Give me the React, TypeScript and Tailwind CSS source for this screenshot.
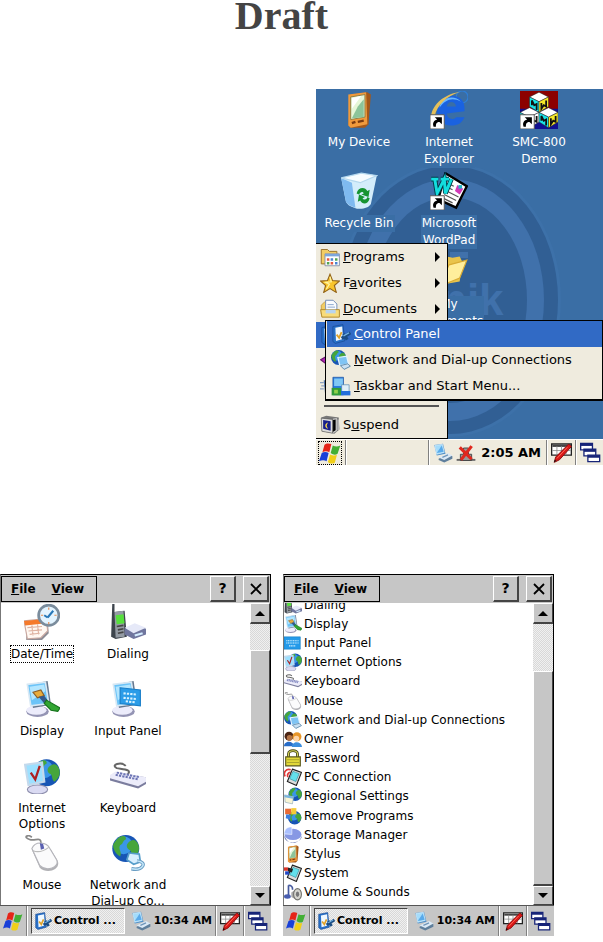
import React, { ReactNode } from "react";

type IconProps = { className?: string };

const Svg = ({ className = "size-8", children }: { className?: string; children: ReactNode }) => (
  <svg viewBox="0 0 32 32" className={"shrink-0 " + className} aria-hidden="true">
    {children}
  </svg>
);

const Shortcut = () => (
  <g>
    <path d="M0 20h12v12H0z" fill="#fff" stroke="#555" strokeWidth=".8" />
    <path d="M4 22h6v6l-2-2c-3 0-3 2-3 4H3c-1-3 0-5 3-6z" fill="#000" />
  </g>
);

const Pda = ({ className }: IconProps) => (
  <Svg className={className}>
    <path d="M9 3 23 1l3 2-2 25-3 3H9l-2-3z" fill="#a4581a" />
    <path d="M7 3 22 1l1 27-14 3-2-2z" fill="#f09a3c" />
    <path d="M9 5 21 3v19L9 24z" fill="#e6f6d8" stroke="#8a7a40" strokeWidth=".8" />
    <path d="m10 23 5-10 5-6v15z" fill="#8cc49a" />
    <path d="m10 6 8-2-8 11z" fill="#fff" />
    <path d="m10 27 3-1m2 0 5-1" stroke="#7a3a10" strokeWidth="2" />
  </Svg>
);

const Recycle = ({ className }: IconProps) => (
  <Svg className={className}>
    <path d="m1 5 17-4 13 2-5 24c-2 4-10 5-14 3-4-1-6-3-7-5z" fill="#d4edfb" />
    <path d="m1 5 9 4 3 21c-4-1-7-3-8-5z" fill="#7fbaf0" />
    <path d="m1 5 17-4 13 2-14 6z" fill="#f6fcff" stroke="#b4d8ee" />
    <path d="M14 18c1-5 7-6 9-2l2-1-1 6-6-2 2-1c-1-2-3-1-4 1zM25 22c-1 5-6 6-8 2l-2 1 1-6 5 2-2 1c1 2 4 1 4-1z" fill="#169432" />
  </Svg>
);

const Explorer = ({ className }: IconProps) => (
  <Svg className={className}>
    <circle cx="27" cy="5" r="5" fill="none" stroke="#2e7fd8" strokeWidth="1" />
    <path d="M29 17C30 8 25 4 18 4 10 4 6 10 6 17c0 8 5 12 12 12 5 0 9-2 11-7h-7c-1 2-7 3-8-3z" fill="#1a62e0" />
    <path d="M14 13c1-5 7-5 8 0z" fill="#3a6ea5" />
    <path d="M8 14C9 6 20 2 26 9c-7-4-13-2-18 5z" fill="#69b8ff" />
    <path d="M1 21C2 11 13 2 25 1 14 4 6 12 4 21z" fill="#e5c05a" />
    <Shortcut />
  </Svg>
);

const Cube = ({ x, y, a, b }: { x: number; y: number; a: string; b: string }) => (
  <g transform={"translate(" + x + " " + y + ")"} stroke="#222" strokeWidth=".4">
    <path d="m0 4 8-4 8 4-8 4z" fill="#fff" />
    <path d="m0 4 8 4v9l-8-5z" fill={a} />
    <path d="m16 4-8 4v9l8-5z" fill={b} />
    <path d="M2 11V7l2 4 2-1v5M10 9v5l2-3 2 1V7" stroke="#111" strokeWidth="1.500" fill="none" />
  </g>
);

const Cubes = ({ className }: IconProps) => (
  <Svg className={className}>
    <path d="M0 0h32v32H0z" fill="#8c0000" />
    <path d="M0 15h32v17H0z" fill="#101090" />
    <Cube x={8} y={1} a="#19e4e8" b="#f5e829" />
    <Cube x={0} y={14} a="#19e4e8" b="#fff" />
    <Cube x={16} y={14} a="#19e4e8" b="#f5e829" />
    <Shortcut />
  </Svg>
);

const WordPad = ({ className }: IconProps) => (
  <Svg className={className}>
    <path d="m13 1 18 11-9 18-15-7z" fill="#fff" stroke="#000" strokeWidth="2" />
    <path d="m16 10 4 2m-5 1 4 2m-5 1 10 5m-12-2 10 5m-11-2 8 4" stroke="#555" />
    <path d="m23 11 5 3-3 5-4-3z" fill="#d23ab8" />
    <path d="M24 11h3v3h-3z" fill="#28b8c8" />
    <path d="M1 6h6m2 0h7M4 6l2 12 6-12 1 12 5-12" fill="none" stroke="#003a48" strokeWidth="4" />
    <path d="M1 6h6m2 0h7M4 6l2 12 6-12 1 12 5-12" fill="none" stroke="#13dede" strokeWidth="2.500" />
    <Shortcut />
  </Svg>
);

const Folder = ({ className }: IconProps) => (
  <Svg className={className}>
    <path d="m5 7 9-4 5 1 6-1 2 4-2 17-17 3z" fill="#e9c44c" />
    <path d="m16 10 15-4-6 15-17 7z" fill="#ffee9c" stroke="#d9ac35" />
  </Svg>
);

const Programs = ({ className }: IconProps) => (
  <Svg className={className}>
    <path d="M2 4h10l3 3h12v20H2z" fill="#f2cd65" stroke="#98702a" strokeWidth="1.500" />
    <path d="M8 11h23v19H8z" fill="#fff" stroke="#8890a8" strokeWidth="1.500" />
    <path d="M8 11h23v4H8z" fill="#7da6dc" />
    <path d="M11 18h4v4h-4zM17 24h4v4h-4z" fill="#e55942" />
    <path d="M17 18h4v4h-4zM24 24h4v4h-4z" fill="#4a83d4" />
    <path d="M24 18h4v4h-4zM11 24h4v4h-4z" fill="#53a553" />
  </Svg>
);

const Star = ({ className }: IconProps) => (
  <Svg className={className}>
    <path d="m16 2 4 10 11 1-8 7 3 11-10-6-10 6 3-11-8-7 11-1z" fill="#f9c52c" stroke="#94651a" strokeWidth="1.800" />
    <path d="m16 6 2 8-9 1 6 3-5 8" fill="none" stroke="#fff3a0" strokeWidth="2" />
  </Svg>
);

const Documents = ({ className }: IconProps) => (
  <Svg className={className}>
    <path d="M2 10 8 4h9v20H2z" fill="#f2cd65" stroke="#b18728" />
    <path d="M9 2h12l6 6v16H9z" fill="#fafcff" stroke="#718bb5" strokeWidth="1.500" />
    <path d="M12 9h10m-10 4h12" stroke="#88a4cc" strokeWidth="1.500" />
    <path d="M1 17h30v12H3z" fill="#f8dc7b" stroke="#b18728" strokeWidth="1.500" />
    <path d="M9 17h16v6H9z" fill="#b8d4ef" />
  </Svg>
);

const ControlIcon = ({ className }: IconProps) => (
  <Svg className={className}>
    <path d="m3 4 16-3 3 26-15 4-4-3z" fill="#2870c8" stroke="#17458d" />
    <path d="m7 6 11-2 1 20L8 27z" fill="#eff8ff" />
    <path d="m9 17 4 5 4-9" fill="none" stroke="#e0a32c" strokeWidth="3" />
    <path d="m17 23 14-9m-11 2 6 9" stroke="#1b4d83" strokeWidth="5" />
    <path d="m20 19 9-5" stroke="#76b7e8" strokeWidth="2" />
  </Svg>
);

const HelpBook = ({ className }: IconProps) => (
  <Svg className={className}>
    <path d="m1 14 14-8 15 6-13 14z" fill="#b42ab8" stroke="#6c1570" strokeWidth="2" />
  </Svg>
);

const RunIcon = ({ className }: IconProps) => (
  <Svg className={className}>
    <path d="M0 9h6M2 14h6M0 19h6" stroke="#8ca0c0" strokeWidth="2" />
    <path d="M7 6h22v20H9z" fill="#dce9f8" stroke="#5577a8" strokeWidth="2" />
  </Svg>
);

const GlobeShape = ({ x = 0, y = 0 }: { x?: number; y?: number }) => (
  <g transform={"translate(" + x + " " + y + ")"}>
    <circle cx="12" cy="12" r="12" fill="#1755b5" />
    <circle cx="10" cy="9" r="8" fill="#3a96e8" />
    <path d="M4 4c5-5 9-3 8 0-3 1-2 4-5 5-2 4 2 6 0 10-4-2-7-7-6-11zM14 7c4-4 7-3 9 1 2 5 0 9-4 12-3-2-1-6-4-7-2-1-3-4-1-6z" fill="#46a53c" />
  </g>
);

const Network = ({ className }: IconProps) => (
  <Svg className={className}>
    <GlobeShape x={2} y={0} />
    <path d="m17 16 9 1 1 7-6 2-6-4z" fill="#d8efff" stroke="#559dca" strokeWidth="1.500" />
    <path d="M24 23c10 1 5 9-5 7" fill="none" stroke="#6a9ec4" strokeWidth="3" />
    <path d="M24 23c10 1 5 9-5 7" fill="none" stroke="#c4e7fa" strokeWidth="1.300" />
  </Svg>
);

const NetworkSmall = ({ className }: IconProps) => (
  <Svg className={className}>
    <GlobeShape />
    <path d="m11 12 14-2 3 12-14 3z" fill="#7fc4f4" stroke="#e6f4ff" strokeWidth="2" />
    <path d="m15 25 12-3 4 4-10 5z" fill="#c9e0f2" stroke="#5a86a8" strokeWidth="1.500" />
  </Svg>
);

const TaskbarIcon = ({ className }: IconProps) => (
  <Svg className={className}>
    <path d="M3 2h17v28H3z" fill="#287be0" stroke="#174b96" />
    <path d="M5 4h14v12H5z" fill="#80c8f5" />
    <path d="M17 14h12v12H17z" fill="#dfeef8" stroke="#467eaa" />
    <path d="M1 19h15v12H1z" fill="#2f9a38" />
    <path d="M5 22h6v6H5z" fill="#8fd04a" />
    <path d="M16 24h15v7H16z" fill="#236dda" />
  </Svg>
);

const Suspend = ({ className }: IconProps) => (
  <Svg className={className}>
    <path d="m2 4 8-3 20 3 1 19-8 7-20-4z" fill="#777" />
    <path d="m2 5 18 2v22L3 26z" fill="#ddd" stroke="#555" />
    <path d="m21 7 5-1v19l-5 3m8-21v17" stroke="#ccc" strokeWidth="2" />
    <path d="m5 8 12 2v15L5 22z" fill="#18208b" />
    <path d="M13 12c-6 1-6 9 0 10-3-4-3-6 0-10z" fill="#f8d94a" />
  </Svg>
);

const Flag = ({ className }: IconProps) => (
  <Svg className={className}>
    <path d="M8 4c3-3 7-2 10-1l-3 12c-3-2-7-2-10 0z" fill="#e52518" />
    <path d="M20 5c4 2 7 2 11 0l-4 12c-3 2-6 2-10-1z" fill="#43af35" />
    <path d="M4 16c3-2 7-2 10 0l-3 12c-3-2-7-2-11 0z" fill="#1940d8" />
    <path d="M16 18c4 2 7 2 10 1l-3 11c-4 2-7 2-10-1z" fill="#f1cf18" />
  </Svg>
);

const Computer = ({ className }: IconProps) => (
  <Svg className={className}>
    <path d="m2 3 14-2 4 16-14 3z" fill="#4d8fc8" />
    <path d="m3 4 12-2 3 13-12 3z" fill="#a4dcfb" stroke="#e0f3ff" />
    <path d="m6 16 8-12 3 10z" fill="#5aaaea" />
    <path d="m9 25 15-8 7 4v4l-13 6-9-4z" fill="#5f7f9c" />
    <path d="m9 23 15-7 7 4-13 7z" fill="#dbe9f6" />
    <path d="m15 23 9-4" stroke="#6f95b8" strokeWidth="2" />
  </Svg>
);

const Disconnected = ({ className }: IconProps) => (
  <Svg className={className}>
    <path d="M1 27h30" stroke="#666" strokeWidth="3" />
    <path d="M12 8h8v10h5v10H7V18h5z" fill="#999" stroke="#444" strokeWidth="1.500" />
    <path d="m6 7 19 19M25 5 8 27" stroke="#e0281e" strokeWidth="5" />
  </Svg>
);

const PenIcon = ({ className }: IconProps) => (
  <Svg className={className}>
    <path d="M1 3h30v17H1z" fill="#fff" stroke="#222" strokeWidth="2" />
    <path d="M2 6h28" stroke="#444" strokeWidth="3" />
    <path d="M2 13h28M9 6v14m7-14v14m7-14v14" stroke="#888" strokeWidth="1.200" />
    <path d="m27 3 4 4-18 20-8 4 2-8z" fill="#d91818" stroke="#8c1010" strokeWidth="1.500" />
    <path d="m9 25 16-17" stroke="#ff6a58" strokeWidth="1.500" />
    <path d="m4 31 2-4 2 2z" fill="#111" />
  </Svg>
);

const Cascade = ({ className }: IconProps) => (
  <Svg className={className}>
    {[[1, 2], [6, 11], [12, 20]].map(([x, y]) => (
      <g key={x}>
        <path d={"M" + x + " " + y + "h18v10h-18z"} fill="#fff" stroke="#172478" strokeWidth="2" />
        <path d={"M" + x + " " + y + "h18v4h-18z"} fill="#172478" />
      </g>
    ))}
  </Svg>
);

const DateTime = ({ className }: IconProps) => (
  <Svg className={className}>
    <path d="m2 16 19-2 1 12-7 7-13-1z" fill="#8c8c94" />
    <path d="m0 15 20-2 1 11-6 6-12 1z" fill="#fff8f2" stroke="#c9a8a0" />
    <path d="m0 15 20-2v4L1 19z" fill="#f57a2b" />
    <path d="m3 21 13-1m-12 4 12-1m-11 4 9-1M7 19l1 9m4-10 1 9" stroke="#dfb3a2" />
    <circle cx="22" cy="10" r="9" fill="#e3f4ff" stroke="#7a8c9c" strokeWidth="2.400" />
    <path d="m21 12 5-6m-5 6-3-2" stroke="#2878b8" strokeWidth="1.800" />
    <path d="M22 3v2m0 11v2m-7-8h2m10 0h2" stroke="#e58a4e" />
  </Svg>
);

const Phone = ({ className }: IconProps) => (
  <Svg className={className}>
    <path d="M2 0h2v7l9-1 2 23-10 2-4-2z" fill="#3d444c" />
    <path d="m4 7 8-1 1 23-8 1z" fill="#949ba4" />
    <path d="m5 10 7-1 1 8-7 1z" fill="#56e03c" />
    <path d="m6 20 6-1m-5 4 5-1m-5 4 5-1" stroke="#444" strokeWidth="1.500" />
    <path d="m13 22 9-4 10 4v5l-11 4-8-4z" fill="#70769e" />
    <path d="m13 21 9-4 10 4-11 5z" fill="#e6e9f8" />
    <path d="m22 28 7-2" stroke="#d4edff" strokeWidth="2" />
  </Svg>
);

const Monitor = () => (
  <g>
    <ellipse cx="12" cy="27" rx="10" ry="5" fill="#9494b4" />
    <ellipse cx="11" cy="26" rx="9" ry="4" fill="#ececfb" />
    <path d="m4 3 17-3 3 21-16 3z" fill="#66788f" />
    <path d="m3 3 16-2 3 19-16 2z" fill="#6cc4f8" stroke="#d7e8f4" strokeWidth="1.500" />
    <path d="m5 5 13-2 1 6L7 17z" fill="#b3e6ff" />
  </g>
);

const Display = ({ className }: IconProps) => (
  <Svg className={className}>
    <Monitor />
    <path d="m8 10 7-2 3 5-6 2z" fill="#e8ac3c" stroke="#8b5e28" />
    <path d="m13 14 5-1 3 4-3 3z" fill="#365a8c" />
    <path d="m20 17 12 7-2 3-6-1-6-6z" fill="#32a632" stroke="#16721d" />
  </Svg>
);

const InputPanel = ({ className }: IconProps) => (
  <Svg className={className}>
    <Monitor />
    <path d="m9 6 18 2v14l-18-2z" fill="#2b9ce8" stroke="#197ec8" />
    <path d="m12 11 12 1m-12 3 12 1m-10 2 8 1" stroke="#d9f3ff" strokeWidth="1.800" strokeDasharray="2 1" />
  </Svg>
);

const KeyPanel = ({ className }: IconProps) => (
  <Svg className={className}>
    <path d="M0 5h29v22H0z" fill="#249ae9" stroke="#167cc3" />
    <path d="M4 12h22m-22 4h22m-17 5h12" stroke="#d9f3ff" strokeWidth="2" strokeDasharray="2 1" />
  </Svg>
);

const InternetOptions = ({ className }: IconProps) => (
  <Svg className={className}>
    <GlobeShape x={8} y={1} />
    <ellipse cx="12" cy="28" rx="9" ry="4" fill="#dadaf2" stroke="#8b8cab" />
    <path d="m1 6 15-2 2 17-14 3z" fill="#9ce0ff" stroke="#c3d9ec" strokeWidth="2" />
    <path d="m6 13 4 6 4-12" fill="none" stroke="#ad2020" strokeWidth="2" />
  </Svg>
);

const Keyboard = ({ className }: IconProps) => (
  <Svg className={className}>
    <path d="M15 15c6-5-4-5-9-6-6-3 4-6 8-2" fill="none" stroke="#666" strokeWidth="1.800" />
    <path d="m0 17 5-4 27 4v6l-7 4L0 20z" fill="#7b7d9e" />
    <path d="m0 15 5-3 27 5v4l-7 4L0 18z" fill="#ececfa" />
    <path d="m5 15 20 4m-19-6 20 4" stroke="#6c74b4" strokeWidth="1.800" strokeDasharray="2 1" />
  </Svg>
);

const Mouse = ({ className }: IconProps) => (
  <Svg className={className}>
    <path d="M15 9C16 0 10 6 5 4-1 2 3-1 7 2" fill="none" stroke="#888" strokeWidth="1.500" />
    <path d="M7 13c3-7 13-6 17 0l6 10c3 8-10 12-16 6z" fill="#b0b0b4" />
    <path d="M7 12c3-7 13-6 16 0l6 10c3 7-9 11-15 5z" fill="#fbfbfc" stroke="#b4b4ba" />
    <path d="M8 14c5 2 10 0 14-3" fill="none" stroke="#bbb" />
    <path d="m14 7 3 1 1 4-3 1z" fill="#5a60b0" />
  </Svg>
);

const Owner = ({ className }: IconProps) => (
  <Svg className={className}>
    <circle cx="9" cy="11" r="8" fill="#4b2515" />
    <circle cx="10" cy="14" r="5" fill="#b47447" />
    <path d="M0 29c0-11 17-11 18 0z" fill="#276cc8" />
    <circle cx="23" cy="12" r="8" fill="#e99628" />
    <circle cx="22" cy="15" r="5" fill="#ffd5a8" />
    <path d="M14 30c0-11 17-11 18 0z" fill="#3b8dde" />
  </Svg>
);

const Lock = ({ className }: IconProps) => (
  <Svg className={className}>
    <path d="M8 15V9c0-8 16-8 16 0v6" fill="none" stroke="#45451a" strokeWidth="5" />
    <path d="M8 15V9c0-8 16-8 16 0v6" fill="none" stroke="#d5d258" strokeWidth="2" />
    <path d="M3 14h26v16H3z" fill="#e2d838" stroke="#5b581c" strokeWidth="2" />
    <path d="M5 19h22m-22 5h22" stroke="#a39c2b" strokeWidth="1.500" />
  </Svg>
);

const HandheldShape = () => (
  <g>
    <path d="m15 2 16 6-9 23L6 24z" fill="#ddd" stroke="#222" strokeWidth="2" />
    <path d="m16 6 11 4-6 14-11-5z" fill="#63e0ec" stroke="#258092" />
  </g>
);

const PcConnection = ({ className }: IconProps) => (
  <Svg className={className}>
    <path d="M12 3C4 0-2 8 2 15M12 8c-4-1-7 4-5 8" fill="none" stroke="#df3838" strokeWidth="3" />
    <HandheldShape />
  </Svg>
);

const System = ({ className }: IconProps) => (
  <Svg className={className}>
    <HandheldShape />
    <path d="M0 6h7v6H0z" fill="#da3328" />
    <path d="M2 13h7v6H2z" fill="#2147c4" />
    <path d="m7 6 9 3-2 6-7-2z" fill="#222" />
  </Svg>
);

const Regional = ({ className }: IconProps) => (
  <Svg className={className}>
    <GlobeShape x={8} y={1} />
    <path d="m1 14 16 3-2 13-13-3z" fill="#f8f5d5" stroke="#819eb2" />
    <path d="m1 14 16 3-1 4-15-3z" fill="#79b5df" />
  </Svg>
);

const Remove = ({ className }: IconProps) => (
  <Svg className={className}>
    <GlobeShape x={7} y={7} />
    <path d="M2 3h11v10H2z" fill="#e96b35" />
    <path d="M13 2h9v11h-9z" fill="#f5cb37" />
    <path d="m4 13 8 1-1 8-8-2z" fill="#397fe0" />
  </Svg>
);

const Storage = ({ className }: IconProps) => (
  <Svg className={className}>
    <path d="M1 16c3 19 29 18 30 0v5c-4 11-27 11-30 0z" fill="#5061a3" />
    <ellipse cx="16" cy="15" rx="15" ry="10" fill="#8798e4" />
    <path d="M14 15V2C6 1 1 6 0 14z" fill="#aac0ff" stroke="#fff" />
  </Svg>
);

const Sound = ({ className }: IconProps) => (
  <Svg className={className}>
    <path d="M8 4v19M8 4c5 0 8 3 7 8" fill="none" stroke="#45599e" strokeWidth="3" />
    <ellipse cx="6" cy="24" rx="6" ry="4" fill="#485db0" />
    <path d="m13 17 10-7v20l-10-5z" fill="#a8a8a8" />
    <ellipse cx="24" cy="20" rx="7" ry="10" fill="#d6d6cf" stroke="#74746f" strokeWidth="2" />
    <ellipse cx="24" cy="20" rx="3" ry="5" fill="#777" />
  </Svg>
);

const uiFont = "font-['DejaVu_Sans',sans-serif]";

type IconType = (p: IconProps) => ReactNode;

const desktopItems: { label: string[]; Icon: IconType }[] = [
  { label: ["My Device"], Icon: Pda },
  { label: ["Internet", "Explorer"], Icon: Explorer },
  { label: ["SMC-800", "Demo"], Icon: Cubes },
  { label: ["Recycle Bin"], Icon: Recycle },
  { label: ["Microsoft", "WordPad"], Icon: WordPad },
];

function DesktopItem({ label, Icon }: { label: string[]; Icon: IconType }) {
  return (
    <button className="flex h-[81px] flex-col items-center gap-[5px] text-[12px] leading-[17px] text-white">
      <Icon className="size-[38px]" />
      <span className="bg-[#3a6ea5] px-px">
        {label.map((l) => (
          <span key={l} className="block whitespace-nowrap">{l}</span>
        ))}
      </span>
    </button>
  );
}

const menuRow = "flex h-[26px] w-full items-center gap-[3px] pl-1 text-left text-[13px] whitespace-nowrap";

type MenuItemProps = { Icon: IconType; children?: ReactNode; label?: string; arrow?: boolean; active?: boolean };

function MenuItem({ Icon, children, label, arrow, active }: MenuItemProps) {
  return (
    <button role="menuitem" aria-label={label} className={menuRow + (active ? " bg-[#316ac5] text-white" : " text-black")}>
      <Icon className="size-5" />
      <span className="flex-1">{children}</span>
      {arrow && <span className="mr-[7px] border-y-[5px] border-l-[5px] border-y-transparent border-l-black" />}
    </button>
  );
}

function Divider() {
  return <span className="w-[2px] self-stretch border-l border-[#808080] bg-white" />;
}

function Desktop() {
  return (
    <section aria-label="Desktop" className={"flex w-[287px] flex-col overflow-hidden bg-[#3a6ea5] " + uiFont}>
      <div className="relative h-[350px] overflow-hidden">
        <svg viewBox="0 0 287 350" className="absolute inset-0 h-full w-full" aria-hidden="true">
          <ellipse cx="134" cy="211" rx="111" ry="137" fill="#3d71a9" />
          <ellipse cx="134" cy="211" rx="108" ry="134" fill="#315f94" />
          <ellipse cx="134" cy="211" rx="94" ry="121" fill="#4071ab" />
          <ellipse cx="134" cy="211" rx="77" ry="103" fill="#315f94" />
          <path d="M134 163h18v6h-18z" fill="#4071ab" />
          <text x="124" y="226" fontSize="44" fontWeight="bold" fontFamily="Liberation Sans, sans-serif" fill="#4071ab">nik</text>
        </svg>
        <div className="relative -ml-[2px] grid grid-cols-[repeat(3,90px)] pt-[2px]">
          {desktopItems.map((d) => <DesktopItem key={d.label[0]} {...d} />)}
          <span />
          <span />
          <DesktopItem label={["My", "Documents"]} Icon={Folder} />
        </div>
        <div role="menu" aria-label="Start" className="absolute bottom-0 left-0 w-[132px] border-t border-r border-b border-black bg-[#efebde]">
          <MenuItem Icon={Programs} arrow><u>P</u>rograms</MenuItem>
          <MenuItem Icon={Star} arrow>F<u>a</u>vorites</MenuItem>
          <MenuItem Icon={Documents} arrow><u>D</u>ocuments</MenuItem>
          <MenuItem Icon={ControlIcon} label="Settings" active />
          <MenuItem Icon={HelpBook} label="Help" />
          <MenuItem Icon={RunIcon} label="Run" />
          <div className="mx-2 my-[5px] h-[2px] bg-[#555]" />
          <MenuItem Icon={Suspend}>S<u>u</u>spend</MenuItem>
        </div>
        <div role="menu" aria-label="Settings" className="absolute top-[231px] right-0 left-[9px] border border-b-2 border-black bg-[#efebde] pl-px">
          <MenuItem Icon={ControlIcon} active><u>C</u>ontrol Panel</MenuItem>
          <MenuItem Icon={NetworkSmall}><u>N</u>etwork and Dial-up Connections</MenuItem>
          <MenuItem Icon={TaskbarIcon}><u>T</u>askbar and Start Menu...</MenuItem>
        </div>
      </div>
      <div className="flex h-[26px] items-center gap-[3px] border-t border-white bg-[#efebde] pr-[2px] pl-[2px]">
        <button aria-label="Start" className="border border-dotted border-black"><Flag className="size-[22px]" /></button>
        <Divider />
        <span className="flex-1" />
        <Divider />
        <Computer className="size-5" />
        <Disconnected className="size-5" />
        <time className="mx-[2px] text-[13px] font-bold whitespace-nowrap">2:05 AM</time>
        <Divider />
        <button aria-label="Input"><PenIcon className="size-[21px]" /></button>
        <Divider />
        <button aria-label="Windows"><Cascade className="size-[21px]" /></button>
      </div>
    </section>
  );
}

const raised = "border border-t-white border-l-white border-r-[#444] border-b-[#444] bg-[#c6c6c6]";
const dither = "bg-[#e4e4e4] bg-[repeating-conic-gradient(#d8d8d8_0_25%,#f0f0f0_0_50%)] bg-[length:2px_2px]";

function ScrollBar({ thumb }: { thumb: string }) {
  return (
    <div className={"flex w-5 shrink-0 flex-col " + dither}>
      <button aria-label="Scroll up" className={"flex h-[21px] items-center justify-center border-b-2 " + raised}>
        <span className="border-x-[5px] border-b-[5px] border-x-transparent border-b-black" />
      </button>
      <div className="flex-1">
        <div className={"border-b-2 " + raised + " " + thumb} />
      </div>
      <button aria-label="Scroll down" className={"flex h-[19px] items-center justify-center " + raised}>
        <span className="border-x-[5px] border-t-[5px] border-x-transparent border-t-black" />
      </button>
    </div>
  );
}

function PanelWindow({ label, thumb, children }: { label: string; thumb: string; children: ReactNode }) {
  const caption = "flex size-[26px] items-center justify-center border-r-2 border-b-2 " + raised;
  return (
    <section aria-label={label} className={"flex w-[271px] flex-col text-black " + uiFont}>
      <div className="border border-b-0 border-l-[#777] border-t-black border-r-black">
        <header className="flex h-[28px] items-center bg-[#c6c6c6] pr-px">
          <nav className="flex h-[26px] w-24 items-center gap-4 border border-black pl-[9px] text-[12px] font-bold">
            <button><u>F</u>ile</button>
            <button><u>V</u>iew</button>
          </nav>
          <span className="flex-1" />
          <button aria-label="Help" className={caption + " mr-[7px] text-[14px] font-bold"}>?</button>
          <button aria-label="Close" className={caption}>
            <svg viewBox="0 0 12 12" className="size-3" aria-hidden="true"><path d="m1 1 10 10M11 1 1 11" stroke="#000" strokeWidth="1.800" /></svg>
          </button>
        </header>
        <div className="flex h-[302px] bg-white">
          <div className="min-w-0 flex-1 overflow-hidden">{children}</div>
          <ScrollBar thumb={thumb} />
        </div>
      </div>
      <footer className="flex h-[31px] items-center gap-[3px] border-t border-[#555] bg-[#c6c6c6] px-[3px]">
        <button aria-label="Start"><Flag className="size-5" /></button>
        <Divider />
        <button className={"flex h-[26px] w-[96px] items-center gap-[2px] border border-t-[#444] border-l-[#444] border-r-white border-b-white pl-[2px] text-[11px] font-bold whitespace-nowrap " + dither}>
          <ControlIcon className="size-[18px]" />
          Control ...
        </button>
        <span className="flex-1" />
        <Computer className="size-5" />
        <time className="text-[11px] font-bold whitespace-nowrap">10:34 AM</time>
        <Divider />
        <button aria-label="Input"><PenIcon className="size-5" /></button>
        <Divider />
        <button aria-label="Windows"><Cascade className="size-5" /></button>
      </footer>
    </section>
  );
}

const gridItems: { label: string; Icon: IconType; focus?: boolean }[] = [
  { label: "Date/Time", Icon: DateTime, focus: true },
  { label: "Dialing", Icon: Phone },
  { label: "Display", Icon: Display },
  { label: "Input Panel", Icon: InputPanel },
  { label: "Internet Options", Icon: InternetOptions },
  { label: "Keyboard", Icon: Keyboard },
  { label: "Mouse", Icon: Mouse },
  { label: "Network and Dial-up Co...", Icon: Network },
];

const listItems: [string, IconType][] = [
  ["Dialing", Phone],
  ["Display", Display],
  ["Input Panel", KeyPanel],
  ["Internet Options", InternetOptions],
  ["Keyboard", Keyboard],
  ["Mouse", Mouse],
  ["Network and Dial-up Connections", NetworkSmall],
  ["Owner", Owner],
  ["Password", Lock],
  ["PC Connection", PcConnection],
  ["Regional Settings", Regional],
  ["Remove Programs", Remove],
  ["Storage Manager", Storage],
  ["Stylus", Pda],
  ["System", System],
  ["Volume & Sounds", Sound],
];

export default function App() {
  return (
    <main className="min-h-[942px] bg-white">
      <h1 className="pr-10 text-center font-['Liberation_Serif',serif] text-[40px] leading-[31px] font-bold text-[#444]">Draft</h1>
      <div className="mt-[58px] flex justify-end">
        <Desktop />
      </div>
      <div className="mt-[109px] flex gap-3">
        <PanelWindow label="Control Panel, icons" thumb="mt-[26px] h-[104px]">
          <div className="-ml-[2px] grid auto-rows-[77px] grid-cols-[86px_86px]">
            {gridItems.map(({ label, Icon, focus }) => (
              <button key={label} className="flex flex-col items-center gap-[6px] pt-px text-[12px] leading-4">
                <Icon className="size-9" />
                <span className={focus ? "outline-1 outline-dotted outline-black" : ""}>{label}</span>
              </button>
            ))}
          </div>
        </PanelWindow>
        <PanelWindow label="Control Panel, list" thumb="mt-[47px] h-[215px]">
          <ul className="-mt-2 grid h-[307px] auto-rows-fr">
            {listItems.map(([label, Icon]) => (
              <li key={label} className="min-h-0">
                <button className="flex h-full items-center gap-[2px] text-[12px] whitespace-nowrap">
                  <Icon className="size-[18px]" />
                  {label}
                </button>
              </li>
            ))}
          </ul>
        </PanelWindow>
      </div>
    </main>
  );
}
